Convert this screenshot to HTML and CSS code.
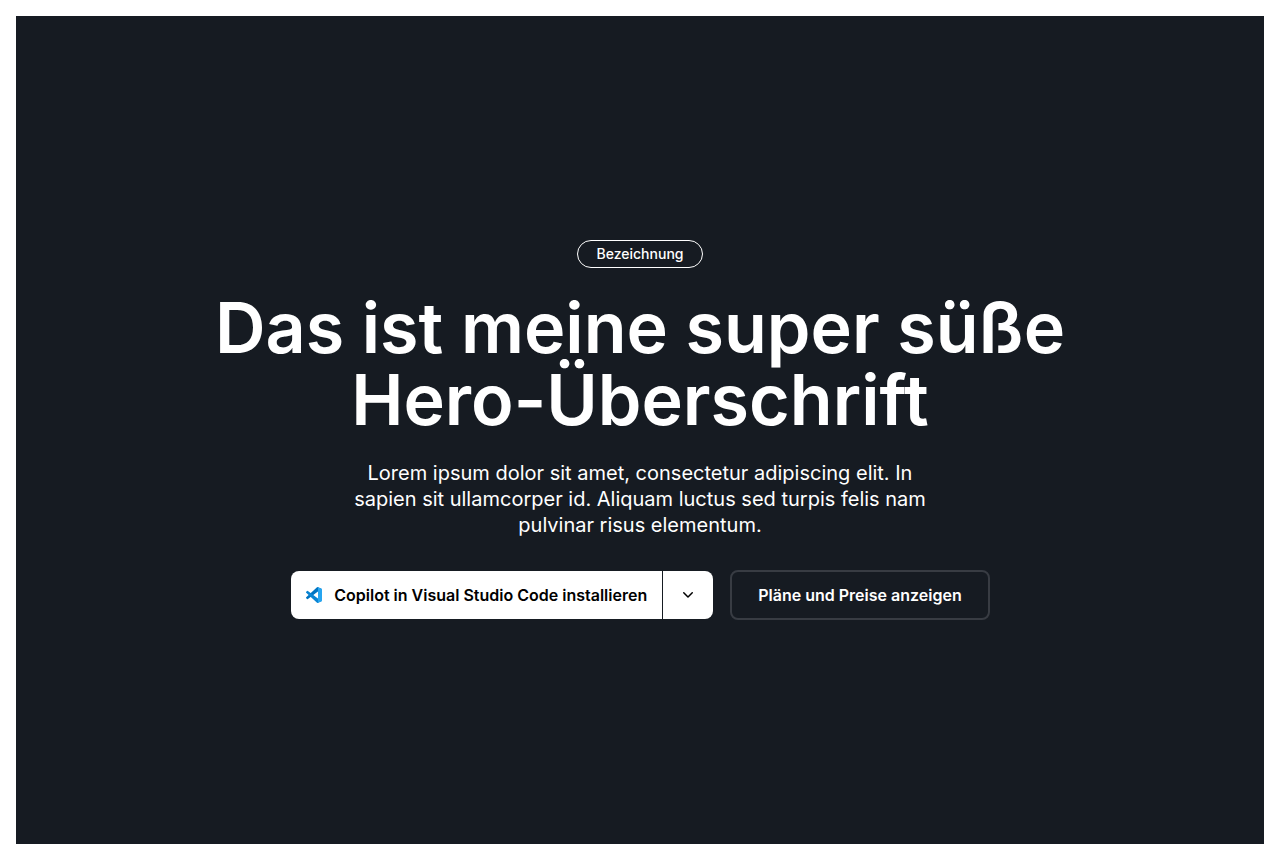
FILE: index.html
```html
<!DOCTYPE html>
<html lang="de">
<head>
  <meta charset="utf-8">
  <meta name="viewport" content="width=device-width, initial-scale=1">
  <title>Hero</title>
  <link rel="stylesheet" href="styles.css">
</head>
<body>
  <main class="page">
    <section class="hero">
      <span class="hero-label">Bezeichnung</span>
      <h1 class="hero-heading">Das ist meine super süße Hero-Überschrift</h1>
      <p class="hero-description">Lorem ipsum dolor sit amet, consectetur adipiscing elit. In sapien sit ullamcorper id. Aliquam luctus sed turpis felis nam pulvinar risus elementum.</p>
      <div class="hero-actions">
        <div class="split-button">
          <button class="split-main" type="button">
            <svg class="vscode-icon" viewBox="0 0 100 100" aria-hidden="true">
              <path fill="#0074c2" d="M96.5 10.8 75.9.9a6.2 6.2 0 0 0-7.1 1.2L1.3 63.6a4.2 4.2 0 0 0 0 6.2l5.5 5a4.2 4.2 0 0 0 5.3.2L93.4 13.4c2.7-2.1 6.600-.1 6.600 3.300v-.2a6.300 6.300 0 0 0-3.500-5.700z"/>
              <path fill="#0a84d2" d="m96.500 89.200-20.600 9.900a6.200 6.200 0 0 1-7.100-1.200L1.300 36.400a4.200 4.200 0 0 1 0-6.200l5.500-5a4.200 4.200 0 0 1 5.300-.2l81.300 61.600c2.700 2.100 6.600.1 6.600-3.300v.2a6.300 6.300 0 0 1-3.500 5.700z"/>
              <path fill="#26a5f0" d="M75.900 99.100a6.200 6.200 0 0 1-7.100-1.200c2.300 2.300 6.200.7 6.200-2.600V4.700c0-3.300-3.900-4.900-6.200-2.600A6.200 6.200 0 0 1 75.900.9l20.600 9.900a6.300 6.300 0 0 1 3.500 5.700v67a6.300 6.300 0 0 1-3.500 5.700z"/>
            </svg>
            <span>Copilot in Visual Studio Code installieren</span>
          </button>
          <button class="split-toggle" type="button" aria-label="Weitere Optionen">
            <svg class="chevron-icon" viewBox="0 0 16 16" aria-hidden="true">
              <path fill="currentColor" d="M12.780 5.220a.749.749 0 0 1 0 1.060l-4.250 4.250a.749.749 0 0 1-1.060 0L3.220 6.280a.749.749 0 1 1 1.060-1.060L8 8.939l3.720-3.719a.749.749 0 0 1 1.060 0Z"/>
            </svg>
          </button>
        </div>
        <a class="outline-button" href="#plans">Pläne und Preise anzeigen</a>
      </div>
    </section>
  </main>
</body>
</html>
```
FILE: styles.css
```css
*,
*::before,
*::after {
  box-sizing: border-box;
}

body {
  margin: 0;
  background: #fff;
  color: #fff;
  font-family: Inter, "Liberation Sans", sans-serif;
}

.page {
  display: flex;
  min-height: 100vh;
  padding: 16px;
}

.hero {
  display: flex;
  flex: 1;
  flex-direction: column;
  align-items: center;
  justify-content: center;
  padding: 24px;
  background: #161b22;
  text-align: center;
}

.hero-label {
  padding: 0 19px;
  border: 1px solid #fff;
  border-radius: 14px;
  font-size: 14px;
  font-weight: 500;
  line-height: 26px;
}

.hero-heading {
  max-width: 920px;
  margin: 24px 0;
  font-size: 70px;
  font-weight: 600;
  line-height: 72px;
}

.hero-description {
  max-width: 600px;
  margin: 0 0 32px;
  font-size: 20px;
  font-weight: 400;
  line-height: 26px;
}

.hero-actions {
  display: flex;
  flex-wrap: wrap;
  justify-content: center;
  gap: 16px;
}

.split-button {
  display: flex;
  gap: 1px;
  padding: 1px;
}

.split-main,
.split-toggle {
  display: flex;
  align-items: center;
  border: 0;
  background: #fff;
  color: #000;
  font-family: inherit;
  font-size: 16px;
  font-weight: 600;
  line-height: 24px;
  cursor: pointer;
}

.split-main {
  gap: 12px;
  padding: 12px 15px;
  border-radius: 8px 0 0 8px;
}

.split-toggle {
  padding: 12px 17px;
  border-radius: 0 8px 8px 0;
}

.vscode-icon,
.chevron-icon {
  display: block;
  width: 16px;
  height: 16px;
}

.outline-button {
  padding: 11px 26px;
  border: 2px solid #383c43;
  border-radius: 8px;
  color: #fff;
  font-size: 16px;
  font-weight: 600;
  line-height: 24px;
  text-decoration: none;
}
```
